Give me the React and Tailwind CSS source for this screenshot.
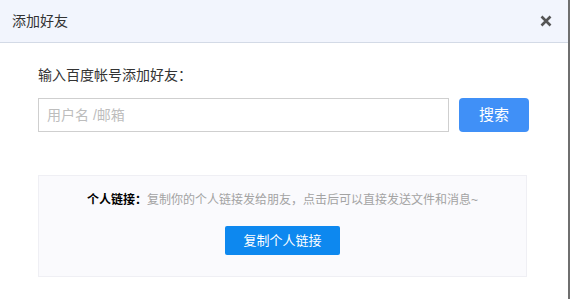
import { useState } from "react";

const font = { fontFamily: '"Liberation Sans", "Noto Sans CJK SC", sans-serif' };

const App = () => {
  const [name, setName] = useState("");

  return (
    <div className="w-[570px] h-[299px] bg-white flex overflow-hidden" style={font}>
      <div className="flex-1 flex flex-col border-r-2 border-[#6f6f6f] w-[568px]">
        {/* header */}
        <div className="h-[43px] bg-[#f2f5fd] border-b border-[#d3dae6] flex items-center justify-between pl-[12px] pr-[16px]">
          <span className="text-[14px] text-[#333]">添加好友</span>
          <svg width="12" height="12" viewBox="0 0 12 12" className="text-[#555]">
            <path d="M1.5 1.5 L10.5 10.5 M10.5 1.5 L1.5 10.5" stroke="currentColor" strokeWidth="2.6" />
          </svg>
        </div>

        {/* body */}
        <div className="px-[38px] pt-[22px]">
          <div className="text-[14px] text-[#333] leading-[20px]">输入百度帐号添加好友：</div>
          <div className="flex gap-[10px] mt-[13px]">
            <input
              value={name}
              onChange={(e) => setName(e.target.value)}
              placeholder="用户名 /邮箱"
              className="w-[411px] h-[34px] border border-[#cfcfcf] px-[8px] text-[14px] text-[#333] placeholder:text-[#bdbdbd] outline-none"
            />
            <button className="w-[70px] h-[34px] rounded-[4px] bg-[#4090f7] text-white text-[15px]">搜索</button>
          </div>

          <div className="mt-[43px] mr-[2px] w-[489px] h-[102px] bg-[#fafafd] border border-[#efeff4] flex flex-col items-center pt-[15px]">
            <div className="text-[12px] leading-[18px]">
              <span className="font-bold text-black">个人链接：</span>
              <span className="text-[#a3a3a3]">复制你的个人链接发给朋友，点击后可以直接发送文件和消息~</span>
            </div>
            <button className="mt-[17px] w-[115px] h-[29px] rounded-[2px] bg-[#0d88ef] text-white text-[13px]">复制个人链接</button>
          </div>
        </div>
      </div>
    </div>
  );
};

export default App;
